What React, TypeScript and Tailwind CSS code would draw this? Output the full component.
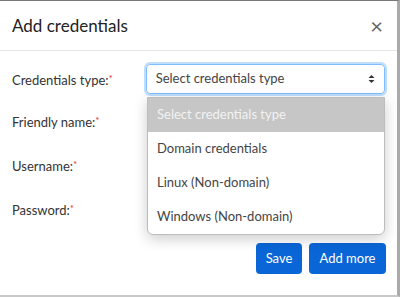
import React from 'react';

const fields = ['Friendly name:', 'Username:', 'Password:'];
const options = ['Select credentials type', 'Domain credentials', 'Linux (Non-domain)', 'Windows (Non-domain)'];

const SortIcon = () => (
    <svg width="7" height="10" viewBox="0 0 7 10" className="text-[#333]">
        <path d="M3.5 1 L6.5 4 H0.5 Z" fill="currentColor" />
        <path d="M3.5 9 L6.5 6 H0.5 Z" fill="currentColor" />
    </svg>
);

const Label = ({ text }: { text: string }) => (
    <span className="text-[13px] text-[#333]">
        {text}
        <span className="relative -top-[3px] text-[#e3342f] text-[10px]">*</span>
    </span>
);

const App: React.FC = () => {
    return (
        <div
            className="relative w-[400px] h-[297px] overflow-hidden bg-white border-t border-[#777] border-r-[3px] border-r-[#aaa] border-b-2 border-b-[#c8c8c8]"
            style={{ fontFamily: 'Lato, "Noto Sans", sans-serif' }}
        >
            <div className="h-[50px] flex items-center justify-between pl-3 pr-[14px] border-b border-[#e4e6e8]">
                <h2 className="text-[17px] text-[#222]">Add credentials</h2>
                <span className="text-[22px] leading-none text-[#666]">×</span>
            </div>

            <div className="px-3 pt-[6px]">
                <div className="h-[44px] flex items-center">
                    <div className="w-[134px]">
                        <Label text="Credentials type:" />
                    </div>
                    <div className="w-[240px] h-[30px] flex items-center justify-between pl-[9px] pr-[9px] rounded border border-[#80bdff] ring-2 ring-[#007bff]/25">
                        <span className="text-[13px] text-[#444]">Select credentials type</span>
                        <SortIcon />
                    </div>
                </div>
                {fields.map((f) => (
                    <div key={f} className="h-[44px] flex items-center">
                        <Label text={f} />
                    </div>
                ))}
            </div>

            <div className="flex justify-end gap-[7px] pr-[11px] pt-[10px]">
                <button className="h-[31px] w-[46px] rounded bg-[#0a66d6] text-white text-[13px]">Save</button>
                <button className="h-[31px] w-[77px] rounded bg-[#0a66d6] text-white text-[13px]">Add more</button>
            </div>

            <div className="absolute left-[147px] top-[96px] w-[238px] bg-white border border-[#bdbdbd] rounded-b-md shadow-[0_4px_14px_rgba(0,0,0,0.2)] overflow-hidden">
                {options.map((o, i) => (
                    <div
                        key={o}
                        className={
                            i === 0
                                ? 'h-[34px] flex items-center pl-[9px] bg-[#c6c6c6] text-[#f2f2f2] text-[13px]'
                                : 'h-[34px] flex items-center pl-[9px] text-[#444] text-[13px]'
                        }
                    >
                        {o}
                    </div>
                ))}
            </div>
        </div>
    );
};

export default App;
